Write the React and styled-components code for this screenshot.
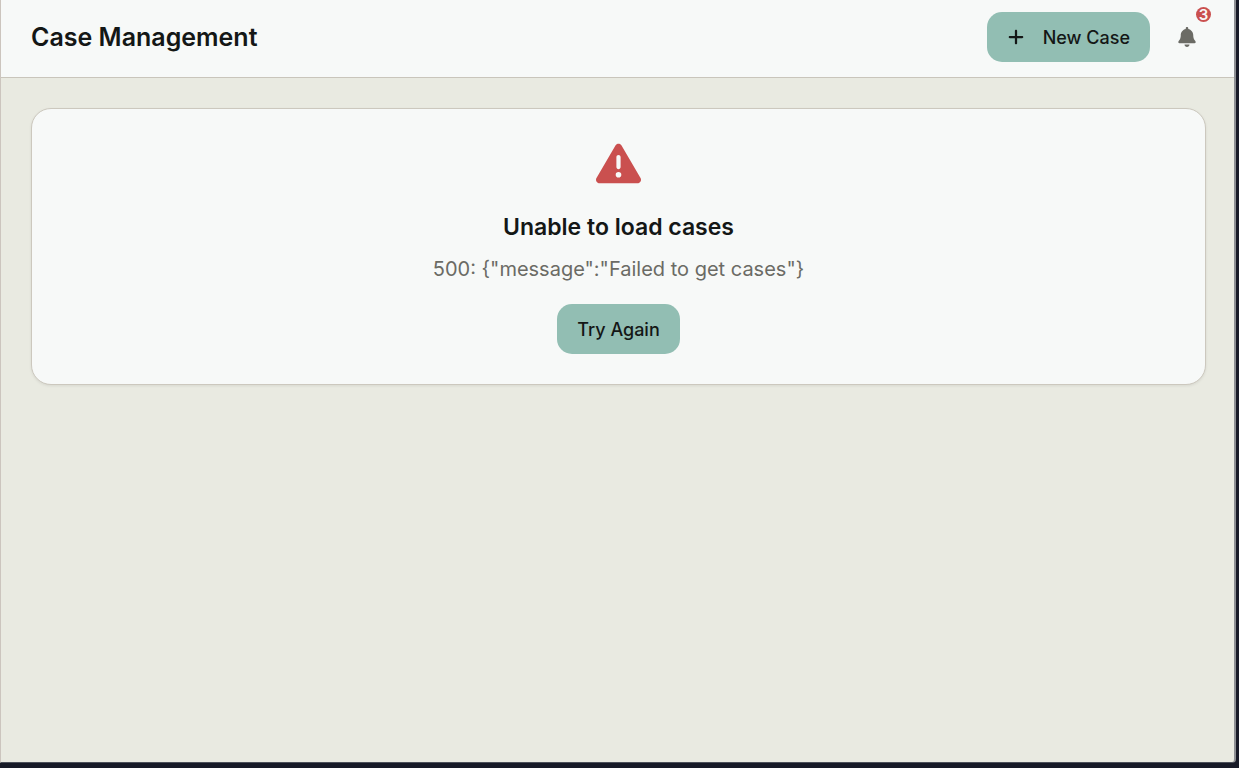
import React from "react";
import styled, { createGlobalStyle } from "styled-components";
import { FaBell, FaPlus, FaTriangleExclamation } from "react-icons/fa6";

const GlobalStyle = createGlobalStyle`
  *, *::before, *::after { box-sizing: border-box; }
  body {
    margin: 0;
    background: #171a27;
    color: #141716;
    font-family: Inter, "Liberation Sans", sans-serif;
  }
`;

const Frame = styled.div`
  min-height: 100vh;
  padding: 0 3px 5px 0;
  display: flex;
`;

const Page = styled.div`
  flex: 1;
  min-width: 0;
  display: flex;
  flex-direction: column;
  background: #e9eae1;
  border-left: 1px solid #ccc5be;
  border-right: 2px solid #8d8f93;
  border-bottom: 1px solid #4c505a;
  border-bottom-right-radius: 4px;
`;

const Header = styled.header`
  display: flex;
  align-items: center;
  justify-content: space-between;
  padding: 12px 28px 15px 30px;
  background: #f7f9f8;
  border-bottom: 1px solid #c9c5bb;
`;

const Title = styled.h1`
  margin: 0;
  font-size: 25px;
  line-height: 36px;
  font-weight: 600;
`;

const Actions = styled.div`
  display: flex;
  align-items: center;
  gap: 18px;
`;

const Button = styled.button`
  display: inline-flex;
  align-items: center;
  gap: 18px;
  height: 50px;
  padding: 0 20px;
  border: 0;
  border-radius: 15px;
  background: #92beb3;
  color: #141716;
  font-family: inherit;
  font-size: 18px;
  line-height: 25px;
  font-weight: 500;
  cursor: pointer;
`;

const BellButton = styled.button`
  position: relative;
  display: flex;
  padding: 10px;
  border: 0;
  background: transparent;
  color: #6b6b65;
  font-family: inherit;
  cursor: pointer;
`;

const BellIcon = styled(FaBell)`
  width: 18px;
  height: 20px;
`;

const Badge = styled.span`
  position: absolute;
  top: -10px;
  right: -5px;
  width: 15px;
  height: 15px;
  border-radius: 50%;
  background: #ca504f;
  color: #f7f9f8;
  font-size: 15px;
  line-height: 15px;
  font-weight: 600;
  text-align: center;
`;

const Main = styled.main`
  flex: 1;
  padding: 30px 28px 30px 30px;
`;

const Card = styled.section`
  display: flex;
  flex-direction: column;
  align-items: center;
  padding: 30px;
  background: #f7f9f8;
  border: 1px solid #ccc8be;
  border-radius: 20px;
  box-shadow: 0 1px 3px rgba(0, 0, 0, 0.08);
  text-align: center;
`;

const AlertIcon = styled.div`
  display: flex;
  align-items: center;
  height: 48px;
  margin-bottom: 22px;
  color: #ca504f;
`;

const Heading = styled.h2`
  margin: 0 0 9px;
  font-size: 23px;
  line-height: 36px;
  font-weight: 600;
`;

const Message = styled.p`
  margin: 0 0 20px;
  color: #6b6b65;
  font-size: 20px;
  line-height: 30px;
`;

export default function App() {
  return (
    <>
      <GlobalStyle />
      <Frame>
        <Page>
          <Header>
            <Title>Case Management</Title>
            <Actions>
              <Button type="button">
                <FaPlus size={18} aria-hidden="true" />
                New Case
              </Button>
              <BellButton type="button" aria-label="Notifications, 3 unread">
                <BellIcon aria-hidden="true" />
                <Badge>3</Badge>
              </BellButton>
            </Actions>
          </Header>
          <Main>
            <Card role="alert">
              <AlertIcon>
                <FaTriangleExclamation size={45} aria-hidden="true" />
              </AlertIcon>
              <Heading>Unable to load cases</Heading>
              <Message>{'500: {"message":"Failed to get cases"}'}</Message>
              <Button type="button">Try Again</Button>
            </Card>
          </Main>
        </Page>
      </Frame>
    </>
  );
}
